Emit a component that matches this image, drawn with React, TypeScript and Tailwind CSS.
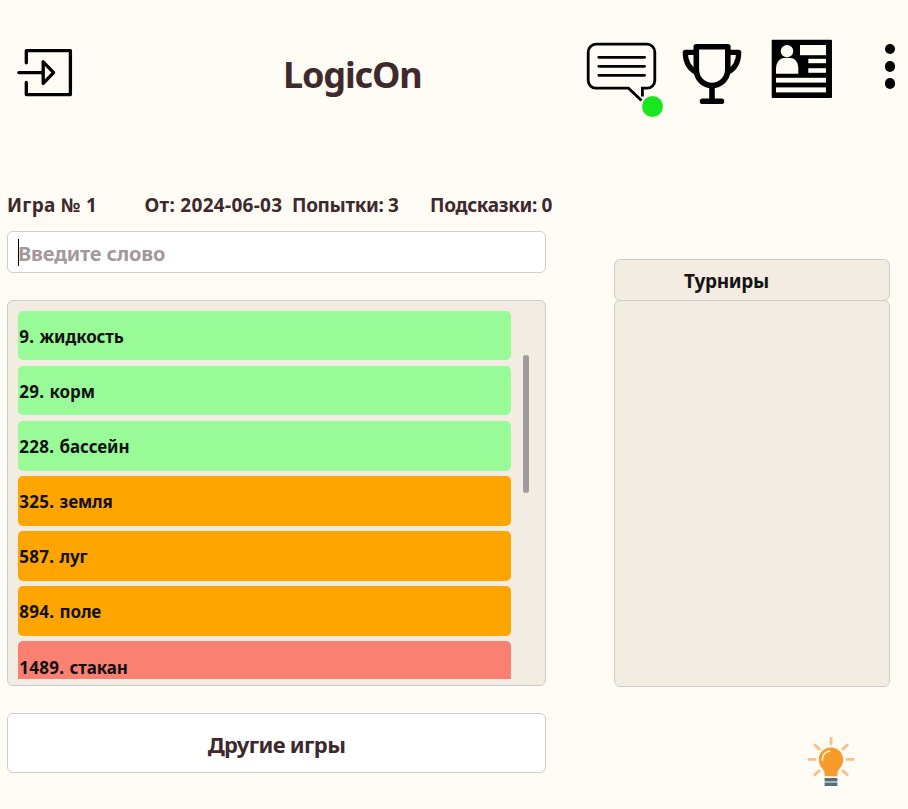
import React from "react";

const guesses = [
  { rank: 9, word: "жидкость", tone: "bg-[#98fb98]" },
  { rank: 29, word: "корм", tone: "bg-[#98fb98]" },
  { rank: 228, word: "бассейн", tone: "bg-[#98fb98]" },
  { rank: 325, word: "земля", tone: "bg-[#ffa500]" },
  { rank: 587, word: "луг", tone: "bg-[#ffa500]" },
  { rank: 894, word: "поле", tone: "bg-[#ffa500]" },
  { rank: 1489, word: "стакан", tone: "bg-[#fa8072]" },
];

function LoginIcon() {
  return (
    <svg className="block h-[50px] w-[56px]" viewBox="0 0 56 50" fill="none" stroke="#000" strokeWidth="3.3">
      <path d="M9.3 14.8V2.6H53.4V46.6H9.3V34.5" strokeLinecap="round" strokeLinejoin="round" />
      <path d="M1.8 24.6H26" strokeLinecap="round" />
      <path d="M26.2 13.8V35.4L36.6 24.6Z" strokeLinejoin="round" />
    </svg>
  );
}

function ChatIcon() {
  return (
    <svg className="block h-[62px] w-[72px]" viewBox="0 0 72 62" fill="none" stroke="#000" strokeWidth="2.8">
      <path d="M56.4 54.5V46.2H61A7.8 7.8 0 0 0 68.8 38.4V10A7.8 7.8 0 0 0 61 2.2H10A7.8 7.8 0 0 0 2.2 10V38.4A7.8 7.8 0 0 0 10 46.2H42.5L55.5 58.5" />
      <path d="M12.8 15.3H58.6M12.8 24.3H58.6M12.8 33.3H58.6" strokeLinecap="round" />
    </svg>
  );
}

function TrophyIcon() {
  return (
    <svg className="block h-[62px] w-[60px]" viewBox="0 0 60 62" fill="none" stroke="#000" strokeWidth="5.6" strokeLinejoin="round">
      <path d="M14.3 3.8H45.8V26C45.8 36 38.5 42.5 30 42.5S14.3 36 14.3 26Z" />
      <path d="M14 9.4H3.3C3.3 19 7.2 25.5 14.5 29.6M46 9.4H56.7C56.7 19 52.8 25.5 45.5 29.6" strokeWidth="5.2" />
      <path d="M30 43V58M20.5 58.3H39.5" strokeLinecap="round" />
    </svg>
  );
}

function NewsIcon() {
  return (
    <svg className="block h-[60px] w-[62px]" viewBox="0 0 62 60">
      <rect x="0.7" y="0.7" width="60.3" height="58.3" rx="1" fill="#000" />
      <g fill="#fffcf5">
        <circle cx="16" cy="12.2" r="6.2" />
        <path d="M5 34.8V30C5 23 9 19 13 19H19.5C24 19 27.3 23 27.3 30V34.8Z" />
        <rect x="29" y="6" width="26" height="10.2" />
        <rect x="37.3" y="19.8" width="17.7" height="4.4" />
        <rect x="37.3" y="29.2" width="17.7" height="4.6" />
        <rect x="5" y="38.8" width="50" height="4.8" />
        <rect x="5" y="48.4" width="50" height="5" />
      </g>
    </svg>
  );
}

function BulbIcon() {
  return (
    <svg className="block h-[52px] w-[50px]" viewBox="0 0 50 52" fill="none">
      <path
        d="M25 2.3V7.7M8.9 9L13.2 13.1M41.1 9L36.8 13.1M2.8 23.4H9M41 23.4H47.2M8.9 38.8L13.2 34.7M41.1 38.8L36.8 34.7"
        stroke="#fbbf88"
        strokeWidth="2.9"
        strokeLinecap="round"
      />
      <path d="M25 11.6C18 11.6 12.8 17 12.8 23.6C12.8 28 14.6 30.2 16.5 32.7C18.2 35 18.6 36.3 18.6 38V40.3H31.4V38C31.4 36.3 31.8 35 33.5 32.7C35.4 30.2 37.2 28 37.2 23.6C37.2 17 32 11.6 25 11.6Z" fill="#f99b2a" />
      <path d="M16.3 24.2C16.3 19 19.5 15.7 23.5 15.2" stroke="#fff2df" strokeWidth="1.8" strokeLinecap="round" />
      <path d="M18.6 42H31.4V45.4H18.6ZM18.6 46.6H31.4V50H18.6Z" fill="#546e7a" />
    </svg>
  );
}

export default function App() {
  return (
    <div className="h-[809px] w-[908px] overflow-hidden bg-[#fffcf5] font-['Noto_Sans','Open_Sans',sans-serif] font-bold whitespace-nowrap text-[#3e2a2c]">
      <header className="flex h-[180px] items-start">
        <div className="ml-[17px] pt-[48px]"><LoginIcon /></div>
        <h1 className="ml-[210px] w-[302.5px] pt-[51px] text-[36px] leading-[48px] tracking-[-1.15px]">LogicOn</h1>
        <div className="relative mt-[41.5px] w-[72px]">
          <ChatIcon />
          <span className="absolute top-[54.5px] left-[56px] size-[21px] rounded-full bg-[#19e61c]" />
        </div>
        <div className="mt-[43px] ml-[24px]"><TrophyIcon /></div>
        <div className="mt-[38.6px] ml-[29px]"><NewsIcon /></div>
        <div className="mt-[43.5px] ml-[52px] flex flex-col gap-[6.6px]">
          <i className="size-[10.8px] rounded-full bg-black" />
          <i className="size-[10.8px] rounded-full bg-black" />
          <i className="size-[10.8px] rounded-full bg-black" />
        </div>
      </header>
      <div className="flex items-start">
        <main className="ml-[7px] w-[539px]">
          <div className="flex h-[51.4px] pt-[11px] text-[19px] leading-[28px]">
            <span className="w-[137.5px] shrink-0 tracking-[0.3px]">Игра № 1</span>
            <span className="w-[147.5px] shrink-0 tracking-[0.3px]">От: 2024-06-03</span>
            <span className="w-[138px] shrink-0 tracking-[-0.35px]">Попытки: 3</span>
            <span className="tracking-[-0.35px]">Подсказки: 0</span>
          </div>
          <div className="flex h-[41.6px] items-center rounded-[6px] border border-[#cfcdcd] bg-white pl-[10px]">
            <span className="h-[27px] w-px bg-black" />
            <span className="-ml-px pt-[4px] text-[20px] tracking-[-0.15px] text-[#a39999]">Введите слово</span>
          </div>
          <section className="mt-[27px] flex h-[386.5px] rounded-[6px] border border-[#cdcbca] bg-[#f3ece2] pt-[9.7px] pl-[9.7px]">
            <div className="flex h-[368.3px] w-[493.5px] flex-col gap-[5.45px] overflow-hidden">
              {guesses.map((g) => (
                <div key={g.rank} className={`flex h-[49.7px] shrink-0 items-center gap-[5.2px] rounded-[5px] pt-[2px] pl-[1.5px] text-[17px] text-[#111] ${g.tone}`}>
                  <span className="tracking-[0.3px]">{g.rank}.</span>
                  <span className="tracking-[-0.12px]">{g.word}</span>
                </div>
              ))}
            </div>
            <div className="mt-[44px] ml-[11.5px] h-[138px] w-[6px] rounded-full bg-[#9d9b9d]" />
          </section>
          <button className="mt-[26.5px] flex h-[60.5px] w-full items-center justify-center rounded-[6px] border border-[#cfcdcd] bg-white pt-[2px] text-[22px] tracking-[-0.66px]">
            Другие игры
          </button>
        </main>
        <aside className="mt-[79px] ml-[67.5px] w-[276.7px]">
          <div className="h-[42px] rounded-[6px] border border-[#cdcbca] bg-[#f3ece2] pt-[6px] pl-[69.5px] text-[19px] leading-[30px] tracking-[-0.35px] text-[#141414]">Турниры</div>
          <div className="-mt-px h-[386.5px] rounded-[6px] border border-[#cdcbca] bg-[#f3ece2]" />
          <div className="mt-[49px] ml-[192.5px]"><BulbIcon /></div>
        </aside>
      </div>
    </div>
  );
}
